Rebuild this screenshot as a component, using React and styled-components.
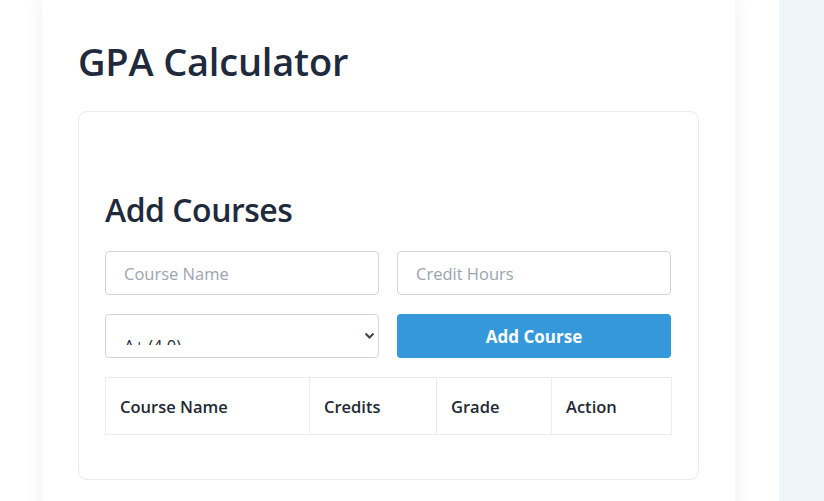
import React from 'react';
import styled, { createGlobalStyle } from 'styled-components';

const GlobalStyle = createGlobalStyle`
    * {
        box-sizing: border-box;
    }

    body {
        margin: 0;
        background: #eff4f9;
        font-family: 'Open Sans', 'Noto Sans', sans-serif;
        color: #1f2a3c;
        overflow: hidden;
    }
`;

const Page = styled.div`
    width: 779px;
    min-height: 100vh;
    background: #ffffff;
    padding: 0 44px 0 42px;
`;

const Card = styled.main`
    background: #ffffff;
    min-height: 560px;
    padding: 36px 36px 40px;
    box-shadow: 0 0 18px rgba(0, 0, 0, 0.07);
`;

const Title = styled.h1`
    margin: 3px 0 26px;
    font-size: 38px;
    font-weight: 600;
    line-height: 1.2;
    letter-spacing: -0.2px;
    color: #1f2a3c;
`;

const Section = styled.section`
    border: 1px solid #e9e9ec;
    border-radius: 9px;
    padding: 77px 27px 44px 26px;
`;

const Heading = styled.h2`
    margin: 0 0 21px;
    font-size: 32px;
    font-weight: 600;
    line-height: 1.3;
    letter-spacing: -0.5px;
    color: #1f2a3c;
`;

const FormGrid = styled.div`
    display: grid;
    grid-template-columns: 1fr 1fr;
    column-gap: 18px;
    row-gap: 19px;
    margin-bottom: 19px;
`;

const Input = styled.input`
    height: 44px;
    width: 100%;
    padding: 0 18px;
    border: 1px solid #d4d4d8;
    border-radius: 4px;
    font-family: inherit;
    font-size: 16.5px;
    color: #1f2a3c;
    background: #fff;
    outline: none;

    &::placeholder {
        color: #9ca3af;
    }
`;

const SelectWrap = styled.div`
    position: relative;
    height: 44px;
`;

const Select = styled.select`
    appearance: none;
    width: 100%;
    height: 44px;
    padding: 24px 18px 12px;
    border: 1px solid #d4d4d8;
    border-radius: 4px;
    font-family: inherit;
    font-size: 16.5px;
    line-height: 14px;
    color: #1f2a3c;
    background: #fff;
    outline: none;
`;

const Chevron = styled.svg`
    position: absolute;
    right: 4px;
    top: 18px;
    width: 11px;
    height: 8px;
    pointer-events: none;
`;

const Button = styled.button`
    height: 44px;
    border: none;
    border-radius: 4px;
    background: #3498db;
    color: #ffffff;
    font-family: inherit;
    font-size: 17px;
    font-weight: 700;
    cursor: pointer;
`;

const Table = styled.table`
    width: 100%;
    border-collapse: collapse;
    table-layout: fixed;
`;

const Th = styled.th`
    width: ${(p) => p.$w}px;
    height: 57px;
    padding: 0 14px;
    border: 1px solid #ececec;
    text-align: left;
    font-size: 16.5px;
    font-weight: 600;
    color: #222a33;
`;

const columns = [
    { label: 'Course Name', width: 204 },
    { label: 'Credits', width: 127 },
    { label: 'Grade', width: 115 },
    { label: 'Action', width: 120 },
];

const grades = ['A+ (4.0)', 'A (4.0)', 'A- (3.7)', 'B+ (3.3)', 'B (3.0)', 'B- (2.7)', 'C+ (2.3)', 'C (2.0)', 'D (1.0)', 'F (0.0)'];

const App = () => {
    return (
        <>
            <GlobalStyle />
            <Page>
                <Card>
                    <Title>GPA Calculator</Title>
                    <Section>
                        <Heading>Add Courses</Heading>
                        <FormGrid>
                            <Input placeholder='Course Name' />
                            <Input placeholder='Credit Hours' />
                            <SelectWrap>
                                <Select defaultValue='A+ (4.0)'>
                                    {grades.map((g) => (
                                        <option key={g}>{g}</option>
                                    ))}
                                </Select>
                                <Chevron viewBox='0 0 11 8'>
                                    <path d='M1.5 1.5 L5.5 5.5 L9.5 1.5' fill='none' stroke='#3a4452' strokeWidth='2' />
                                </Chevron>
                            </SelectWrap>
                            <Button>Add Course</Button>
                        </FormGrid>
                        <Table>
                            <thead>
                                <tr>
                                    {columns.map((c) => (
                                        <Th key={c.label} $w={c.width}>{c.label}</Th>
                                    ))}
                                </tr>
                            </thead>
                        </Table>
                    </Section>
                </Card>
            </Page>
        </>
    );
};

export default App;
